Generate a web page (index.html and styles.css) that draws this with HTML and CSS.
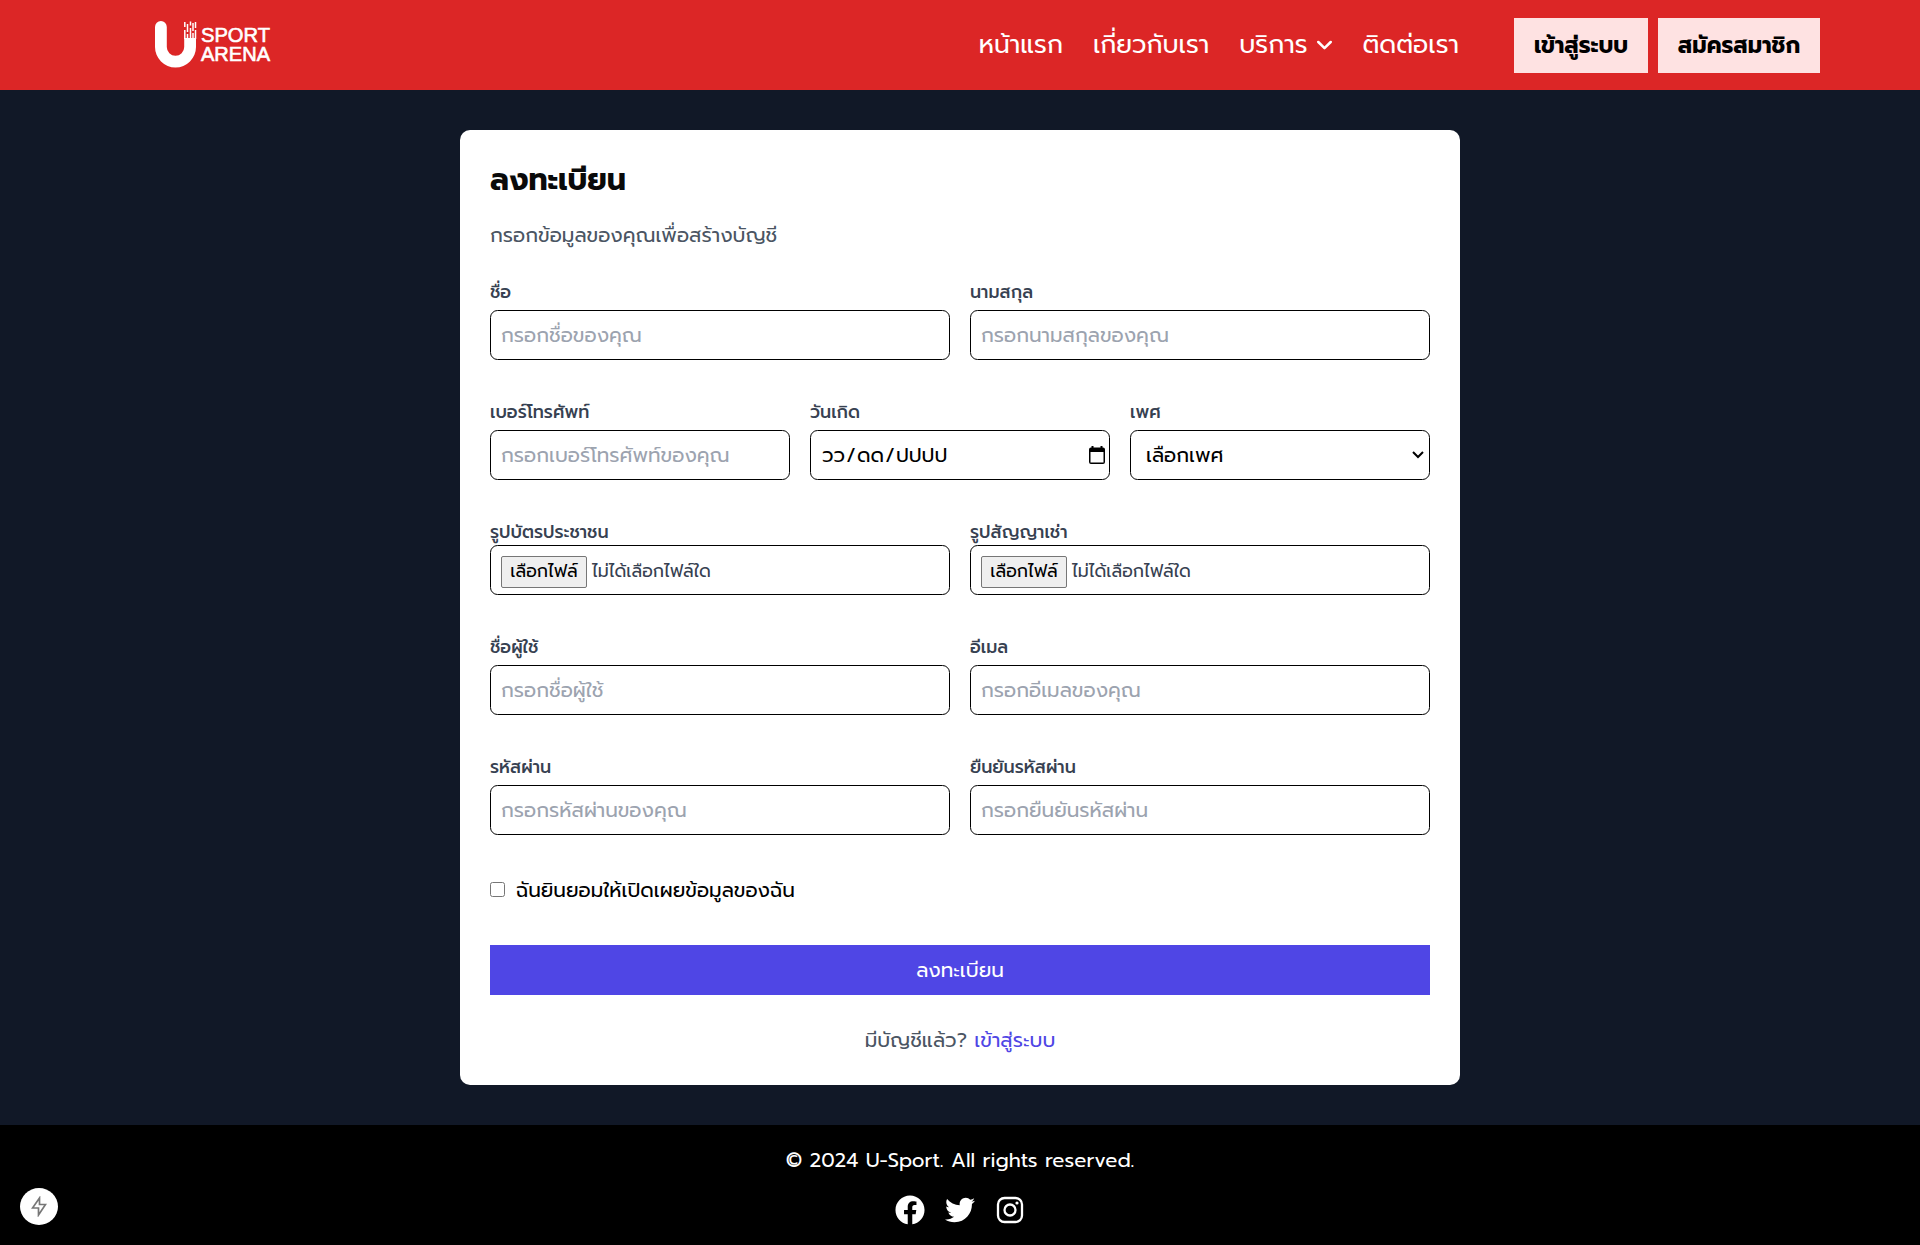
FILE: index.html
```html
<!DOCTYPE html>
<html lang="th">
<head>
<meta charset="utf-8">
<title>U-Sport Arena</title>
<link rel="stylesheet" href="styles.css">
</head>
<body>
<header class="navbar">
  <a class="logo" aria-label="U Sport Arena">
    <svg width="118" height="50" viewBox="0 0 118 50">
      <path d="M0 7a5.800 5.800 0 0 1 11.800 0V27a8.700 8.700 0 0 0 17.400 0V18H41V27a20.500 20.500 0 0 1-41 0z" fill="#fff"/>
      <path d="M29.800 2v5M32.500 4v8M35.500 1.500v4M38 3v8M40.500 2v6M29.800 10v9M32.500 14v6M35.500 8v11M38 13v7M40.500 10v9" stroke="#fff" stroke-width="1.500"/>
      <text class="logo-text" x="46" y="22" textLength="69" lengthAdjust="spacingAndGlyphs">SPORT</text>
      <text class="logo-text" x="46" y="41" textLength="69" lengthAdjust="spacingAndGlyphs">ARENA</text>
    </svg>
  </a>
  <nav class="links">
    <a>หน้าแรก</a>
    <a>เกี่ยวกับเรา</a>
    <a class="with-arrow">บริการ
      <svg width="15" height="11" viewBox="0 0 15 11"><path d="M1.300 2l6.200 6.200L13.700 2" fill="none" stroke="#fff" stroke-width="2.500" stroke-linecap="round" stroke-linejoin="round"/></svg>
    </a>
    <a>ติดต่อเรา</a>
  </nav>
  <div class="actions">
    <a class="action login">เข้าสู่ระบบ</a>
    <a class="action join">สมัครสมาชิก</a>
  </div>
</header>
<main class="page">
  <form class="card">
    <h1 class="title">ลงทะเบียน</h1>
    <p class="intro">กรอกข้อมูลของคุณเพื่อสร้างบัญชี</p>
    <div class="row">
      <div class="field"><label>ชื่อ</label><input class="input" placeholder="กรอกชื่อของคุณ"></div>
      <div class="field"><label>นามสกุล</label><input class="input" placeholder="กรอกนามสกุลของคุณ"></div>
    </div>
    <div class="row three">
      <div class="field"><label>เบอร์โทรศัพท์</label><input class="input" placeholder="กรอกเบอร์โทรศัพท์ของคุณ"></div>
      <div class="field"><label>วันเกิด</label>
        <div class="input date"><span class="date-text"><span>วว</span><span>/</span><span>ดด</span><span>/</span><span>ปปปป</span></span>
          <svg width="16" height="18" viewBox="0 0 16 18"><path d="M2.500 0h2v1.500h7V0h2v1.500H14a2 2 0 0 1 2 2V16a2 2 0 0 1-2 2H2a2 2 0 0 1-2-2V3.500a2 2 0 0 1 2-2h.500zM1.500 6v10.500h13V6z"/></svg>
        </div>
      </div>
      <div class="field"><label>เพศ</label>
        <div class="input select"><span>เลือกเพศ</span>
          <svg width="12" height="8" viewBox="0 0 12 8"><path d="M1 1l5 5 5-5" fill="none" stroke="#000" stroke-width="2"/></svg>
        </div>
      </div>
    </div>
    <div class="row files">
      <div class="field"><label>รูปบัตรประชาชน</label><div class="input file"><span class="file-button">เลือกไฟล์</span><span class="file-name">ไม่ได้เลือกไฟล์ใด</span></div></div>
      <div class="field"><label>รูปสัญญาเช่า</label><div class="input file"><span class="file-button">เลือกไฟล์</span><span class="file-name">ไม่ได้เลือกไฟล์ใด</span></div></div>
    </div>
    <div class="row">
      <div class="field"><label>ชื่อผู้ใช้</label><input class="input" placeholder="กรอกชื่อผู้ใช้"></div>
      <div class="field"><label>อีเมล</label><input class="input" placeholder="กรอกอีเมลของคุณ"></div>
    </div>
    <div class="row">
      <div class="field"><label>รหัสผ่าน</label><input class="input" placeholder="กรอกรหัสผ่านของคุณ"></div>
      <div class="field"><label>ยืนยันรหัสผ่าน</label><input class="input" placeholder="กรอกยืนยันรหัสผ่าน"></div>
    </div>
    <label class="consent"><span class="box"></span>ฉันยินยอมให้เปิดเผยข้อมูลของฉัน</label>
    <button class="submit" type="button">ลงทะเบียน</button>
    <p class="signin">มีบัญชีแล้ว? <a>เข้าสู่ระบบ</a></p>
  </form>
</main>
<footer class="footer">
  <p>© 2024 U-Sport. All rights reserved.</p>
  <div class="social">
    <svg width="30" height="30" viewBox="0 0 512 512"><path d="M504 256C504 119 393 8 256 8S8 119 8 256c0 123.780 90.690 226.380 209.250 245V327.690h-63V256h63v-54.640c0-62.150 37-96.480 93.670-96.480 27.140 0 55.520 4.840 55.520 4.840v61h-31.280c-30.800 0-40.410 19.120-40.410 38.730V256h68.780l-11 71.690h-57.780V501C413.310 482.380 504 379.780 504 256z"/></svg>
    <svg width="30" height="30" viewBox="0 0 512 512"><path d="M459.370 151.716c.325 4.548.325 9.097.325 13.645 0 138.720-105.583 298.558-298.558 298.558-59.452 0-114.680-17.219-161.137-47.106 8.447.974 16.568 1.299 25.340 1.299 49.055 0 94.213-16.568 130.274-44.832-46.132-.975-84.792-31.188-98.112-72.772 6.498.974 12.995 1.624 19.818 1.624 9.421 0 18.843-1.300 27.614-3.573-48.081-9.747-84.143-51.980-84.143-102.985v-1.299c13.969 7.797 30.214 12.670 47.431 13.319-28.264-18.843-46.781-51.005-46.781-87.391 0-19.492 5.197-37.360 14.294-52.954 51.655 63.675 129.300 105.258 216.365 109.807-1.624-7.797-2.599-15.918-2.599-24.040 0-57.828 46.782-104.934 104.934-104.934 30.213 0 57.502 12.670 76.670 33.137 23.715-4.548 46.456-13.320 66.599-25.340-7.798 24.366-24.366 44.833-46.132 57.827 21.117-2.273 41.584-8.122 60.426-16.243-14.292 20.791-32.161 39.308-52.628 54.253z"/></svg>
    <svg class="insta" width="30" height="30" viewBox="0 0 30 30"><rect x="3" y="3" width="24" height="24" rx="6.500"/><circle cx="15" cy="15" r="5.500"/><circle class="dot" cx="22" cy="8" r="1.600"/></svg>
  </div>
</footer>
<div class="dev-badge"><svg width="16" height="21" viewBox="0 0 16 21"><path d="M8.500 2L1.500 12H7.500V19L14.500 8.500H8.500Z" fill="none" stroke="#777" stroke-width="1.700"/></svg></div>
</body>
</html>
```
FILE: styles.css
```css
* { box-sizing: border-box; margin: 0; }
html { font-size: 20px; }
body { font-family: Prompt, sans-serif; font-size: 20px; line-height: 30px; background: #111827; color: #0a0a0a; white-space: nowrap; }
.navbar { height: 90px; background: #dc2626; display: flex; align-items: center; padding: 0 100px 0 155px; }
.logo { display: flex; margin-right: auto; }
.logo-text { font: 19.500px "Liberation Sans", sans-serif; fill: #fff; stroke: #fff; stroke-width: 0.600; }
.links { display: flex; gap: 30px; font-size: 25px; line-height: 35px; color: #fff; margin-right: 55px; }
.with-arrow { display: flex; align-items: center; gap: 10px; }
.actions { display: flex; gap: 10px; }
.action { height: 55px; background: #fee2e2; color: #000; font-weight: 700; font-size: 22.500px; line-height: 55px; text-align: center; }
.login { width: 134px; }
.join { width: 162px; }
.page { padding: 40px 0; display: flex; justify-content: center; }
.card { width: 1000px; background: #fff; border-radius: 10px; padding: 30px; display: flex; flex-direction: column; }
.title { font-size: 30px; line-height: 40px; font-weight: 700; margin-bottom: 20px; }
.intro { color: #4b5563; margin-bottom: 30px; }
.row { display: grid; grid-template-columns: 1fr 1fr; gap: 20px; margin-bottom: 40px; }
.three { grid-template-columns: 1fr 1fr 1fr; }
.field { display: flex; flex-direction: column; gap: 5px; min-width: 0; }
.files .field { gap: 0; }
.field label { font-size: 17.500px; line-height: 25px; font-weight: 500; color: #374151; }
.input { width: 100%; height: 50px; border: 1px solid #000; border-radius: 7.500px; padding: 0 10px; background: #fff; font: 400 20px/30px Prompt, sans-serif; color: #000; }
.input::placeholder { color: #9ca3af; opacity: 1; }
.date, .select { display: flex; align-items: center; justify-content: space-between; }
.date { padding: 0 4px 0 11px; }
.date-text { display: flex; gap: 1.200px; }
.select { padding: 0 5px 0 15px; }
.file { display: flex; align-items: center; gap: 5px; font-size: 17.500px; line-height: 25px; color: #374151; padding-top: 4px; }
.file-name { padding-bottom: 2px; }
.file-button { height: 32px; width: 86px; text-align: center; line-height: 29px; background: #efefef; border: 1px solid #767676; border-radius: 2px; color: #000; }
.consent { display: flex; align-items: center; gap: 11px; color: #000; margin-bottom: 40px; }
.box { width: 15px; height: 15px; margin-bottom: 2px; border: 1px solid #767676; border-radius: 2.500px; background: #fff; }
.submit { height: 50px; border: 0; background: #4f46e5; color: #fff; font: 400 20px/30px Prompt, sans-serif; margin-bottom: 30px; }
.signin { text-align: center; color: #4b5563; }
.signin a { color: #4f46e5; }
.footer { height: 120px; background: #000; color: #fff; padding: 20px 0; display: flex; flex-direction: column; align-items: center; gap: 20px; }
.social { display: flex; gap: 20px; fill: #fff; }
.insta { fill: none; stroke: #fff; stroke-width: 2.300; }
.insta .dot { fill: #fff; stroke: none; }
.dev-badge { position: fixed; left: 20px; top: 1188px; width: 38px; height: 37px; border-radius: 50%; background: #fff; display: flex; align-items: center; justify-content: center; }
```
